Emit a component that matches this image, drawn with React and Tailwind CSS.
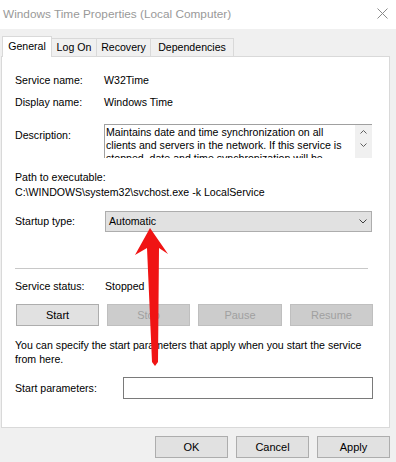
import React from "react";

const font = { fontFamily: '"Liberation Sans", Arial, sans-serif' };

const tabs = [
    { name: "General", w: "w-[50px]", active: true },
    { name: "Log On", w: "w-[45px]" },
    { name: "Recovery", w: "w-[54px]" },
    { name: "Dependencies", w: "w-[83px]" },
];

function Btn({ children, disabled, className = "" }) {
    return (
        <div
            className={
                "h-[22px] flex items-center justify-center border text-[11px] " +
                (disabled
                    ? "bg-[#cccccc] border-[#bfbfbf] text-[#a0a0a0] "
                    : "bg-[#e1e1e1] border-[#adadad] text-black ") +
                className
            }
        >
            {children}
        </div>
    );
}

function Row({ label, children, labelW = "w-[89px]", className = "" }) {
    return (
        <div className={"flex items-center " + className}>
            <div className={labelW + " shrink-0"}>{label}</div>
            {children}
        </div>
    );
}

export default function App() {
    return (
        <div className="relative w-[396px] h-[462px] bg-[#f0f0f0] overflow-hidden text-[10.6px] leading-[13px] text-black" style={font}>
            {/* Title bar */}
            <div className="h-[29px] bg-white flex items-center justify-between pl-[3px] pr-[8px]">
                <span className="text-[11.8px] text-[#999999]">Windows Time Properties (Local Computer)</span>
                <svg width="11" height="11" viewBox="0 0 11 11" className="mt-[-2px]">
                    <path d="M0.5 0.5 L10.5 10.5 M10.5 0.5 L0.5 10.5" stroke="#8a8a8a" strokeWidth="1" />
                </svg>
            </div>

            {/* Tabs */}
            <div className="h-[27px] flex items-end pl-[2px]">
                {tabs.map((t) =>
                    t.active ? (
                        <div
                            key={t.name}
                            className={t.w + " relative z-10 h-[21px] mb-[-1px] bg-white border-l border-t border-r border-[#d9d9d9] flex items-center justify-center pb-[1px]"}
                        >
                            {t.name}
                        </div>
                    ) : (
                        <div
                            key={t.name}
                            className={t.w + " h-[18px] border-t border-r border-[#d9d9d9] flex items-center justify-center"}
                        >
                            {t.name}
                        </div>
                    )
                )}
            </div>

            {/* Panel */}
            <div className="ml-[1px] w-[389px] h-[372px] bg-white border border-[#d9d9d9] pl-[13px] pt-[17px] flex flex-col">
                <Row label="Service name:">
                    <span>W32Time</span>
                </Row>
                <Row label="Display name:" className="mt-[9px]">
                    <span>Windows Time</span>
                </Row>

                <div className="flex items-start mt-[15px]">
                    <div className="w-[89px] shrink-0 mt-[5px]">Description:</div>
                    <div className="w-[268px] h-[34px] border-t border-l border-[#a0a0a0] flex overflow-hidden">
                        <div className="flex-1 pl-[1px] pt-[1px] leading-[13px] overflow-hidden">
                            Maintains date and time synchronization on all clients and servers in the network. If this service is stopped, date and time synchronization will be unavailable.
                        </div>
                        <div className="w-[17px] shrink-0 bg-[#f0f0f0] flex flex-col items-center pt-[5px] gap-[9px]">
                            <svg width="7" height="4" viewBox="0 0 7 4">
                                <path d="M0.5 3.5 L3.5 0.5 L6.5 3.5" fill="none" stroke="#606060" />
                            </svg>
                            <svg width="7" height="4" viewBox="0 0 7 4">
                                <path d="M0.5 0.5 L3.5 3.5 L6.5 0.5" fill="none" stroke="#606060" />
                            </svg>
                        </div>
                    </div>
                </div>

                <div className="mt-[13px]">Path to executable:</div>
                <div className="mt-[2px]">C:\WINDOWS\system32\svchost.exe -k LocalService</div>

                <Row label="Startup type:" className="mt-[12px]">
                    <div className="ml-[1px] w-[267px] h-[21px] bg-[#e1e1e1] border border-[#adadad] flex items-center justify-between pl-[3px] pr-[4px]">
                        <span>Automatic</span>
                        <svg width="8" height="5" viewBox="0 0 8 5">
                            <path d="M0.5 0.5 L4 4 L7.5 0.5" fill="none" stroke="#404040" />
                        </svg>
                    </div>
                </Row>

                <div className="mt-[36px] w-[353px] h-px bg-[#c8c8c8]" />

                <Row label="Service status:" className="mt-[11px]">
                    <span className="ml-[1px]">Stopped</span>
                </Row>

                <div className="mt-[11px] ml-[1px] flex gap-[8px]">
                    <Btn className="w-[83px]">Start</Btn>
                    <Btn disabled className="w-[83px]">Stop</Btn>
                    <Btn disabled className="w-[84px]">Pause</Btn>
                    <Btn disabled className="w-[83px]">Resume</Btn>
                </div>

                <div className="mt-[12px] w-[360px] leading-[14px]">
                    You can specify the start parameters that apply when you start the service from here.
                </div>

                <Row label="Start parameters:" labelW="w-[108px]" className="mt-[11px]">
                    <div className="w-[250px] h-[22px] bg-white border border-[#7a7a7a]" />
                </Row>
            </div>

            {/* Dialog buttons */}
            <div className="mt-[8px] flex justify-end gap-[8px] pr-[6px]">
                <Btn className="w-[73px]">OK</Btn>
                <Btn className="w-[73px]">Cancel</Btn>
                <Btn className="w-[73px]">Apply</Btn>
            </div>

            {/* Annotation arrow */}
            <svg className="absolute left-0 top-0 pointer-events-none" width="396" height="462" viewBox="0 0 396 462">
                <polygon
                    points="150,228 168,254 159,248 158,362 155,366 152,362 147,248 135,255"
                    fill="#f01414"
                />
            </svg>
        </div>
    );
}
